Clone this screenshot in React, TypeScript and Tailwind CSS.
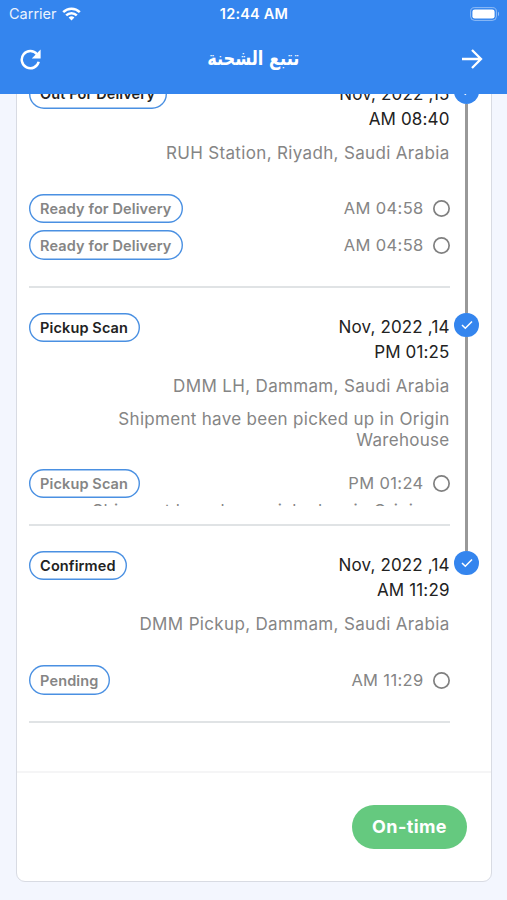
import { clsx } from "clsx";

interface Event {
  label: string;
  time: string;
  note?: string;
}

interface Step {
  label: string;
  date: string;
  time: string;
  place: string;
  note?: string;
  events: Event[];
}

const steps: Step[] = [
  {
    label: "Out For Delivery",
    date: "Nov, 2022 ,15",
    time: "AM 08:40",
    place: "RUH Station, Riyadh, Saudi Arabia",
    events: [
      { label: "Ready for Delivery", time: "AM 04:58" },
      { label: "Ready for Delivery", time: "AM 04:58" },
    ],
  },
  {
    label: "Pickup Scan",
    date: "Nov, 2022 ,14",
    time: "PM 01:25",
    place: "DMM LH, Dammam, Saudi Arabia",
    note: "Shipment have been picked up in Origin Warehouse",
    events: [
      {
        label: "Pickup Scan",
        time: "PM 01:24",
        note: "Shipment have been picked up in Origin",
      },
    ],
  },
  {
    label: "Confirmed",
    date: "Nov, 2022 ,14",
    time: "AM 11:29",
    place: "DMM Pickup, Dammam, Saudi Arabia",
    events: [{ label: "Pending", time: "AM 11:29" }],
  },
];

function StatusBar() {
  return (
    <div className="grid h-[27px] grid-cols-3 items-center pl-[9px] pr-[7px] text-[14.5px] text-white">
      <div className="flex items-center gap-[5px]">
        <span className="opacity-90">Carrier</span>
        <svg width="19" height="14" viewBox="0 0 19 14" fill="none" stroke="white" strokeWidth="2.5">
          <path d="M1.2 5.2a11.7 11.7 0 0 1 16.6 0" />
          <path d="M4.2 8.4a7.5 7.5 0 0 1 10.6 0" />
          <path d="M9.5 13.6 6.6 10.6a4.1 4.1 0 0 1 5.8 0z" fill="white" stroke="none" />
        </svg>
      </div>
      <span className="-ml-[1px] text-center font-semibold tracking-[0.2px]">12:44 AM</span>
      <svg className="justify-self-end" width="30" height="14" viewBox="0 0 30 14" fill="none">
        <rect x="0.6" y="0.6" width="25.8" height="12.8" rx="4" stroke="white" strokeOpacity="0.45" />
        <rect x="2.4" y="2.4" width="22.2" height="9.2" rx="2.4" fill="white" />
        <path d="M28 4.8c1.3.5 1.3 3.9 0 4.4z" fill="white" fillOpacity="0.5" />
      </svg>
    </div>
  );
}

function Header() {
  return (
    <header className="relative z-10 h-[94px] bg-[#3485ee]">
      <StatusBar />
      <div className="grid h-[64px] grid-cols-[1fr_auto_1fr] items-center pl-[20px] pr-[24px]">
        <button aria-label="Refresh" className="justify-self-start">
          <svg width="21" height="21" viewBox="0 0 21 21" fill="none">
            <path d="M17 5.2A8.6 8.6 0 1 0 18.7 12.8" stroke="white" strokeWidth="2.5" />
            <path d="M20.6 0.6V9.4H11.8z" fill="white" />
          </svg>
        </button>
        <h1
          dir="rtl"
          className="whitespace-nowrap pb-[4px] pl-[4px] font-['DejaVu_Sans',sans-serif] text-[18px] font-bold text-white"
        >
          <span className="inline-block origin-center scale-x-90 scale-y-110">تتبع الشحنة</span>
        </h1>
        <button aria-label="Back" className="justify-self-end">
          <svg width="21" height="20" viewBox="0 0 21 20" fill="none" stroke="white" strokeWidth="2.3">
            <path d="M0 10H19M10 1l9 9-9 9" />
          </svg>
        </button>
      </div>
    </header>
  );
}

function Pill({ label, muted }: { label: string; muted?: boolean }) {
  return (
    <span
      className={clsx(
        "flex h-[29.5px] items-center whitespace-nowrap rounded-full px-[11.5px] text-[14.5px] font-semibold tracking-[0.12px] shadow-[inset_0_0_0_1.4px_#4a90e2]",
        muted ? "text-[#858585]" : "text-[#222]",
      )}
    >
      {label}
    </span>
  );
}

function EventRow({ event }: { event: Event }) {
  return (
    <div className="flex h-[29px] items-center justify-between">
      <Pill label={event.label} muted />
      <div className="flex items-center gap-[9px] text-[#858585]">
        <span className="tracking-[0.35px]">{event.time}</span>
        <span className="size-[17px] rounded-full shadow-[inset_0_0_0_1.7px_#808080]" />
      </div>
    </div>
  );
}

function TimelineStep({ step, last }: { step: Step; last: boolean }) {
  return (
    <li className="flex gap-[5px]">
      <div className={clsx("w-[421px] text-[16.5px] leading-[21px]", !last && "pb-[24.5px]")}>
        <div className="flex h-[52px] items-start justify-between">
          <Pill label={step.label} />
          <div className="pt-[2.5px] text-right text-[17px] leading-[25px] tracking-[0.15px] text-[#222]">
            <p>{step.date}</p>
            <p>{step.time}</p>
          </div>
        </div>
        <p className="mt-[11.5px] text-right text-[17px] tracking-[0.34px] text-[#858585]">{step.place}</p>
        {step.note && (
          <p className="ml-auto mt-[12px] w-[345px] text-right text-[17px] tracking-[0.3px] text-[#858585]">
            {step.note}
          </p>
        )}
        <div className={clsx("flex flex-col gap-[7.5px]", step.note ? "mt-[18px]" : "mt-[30.5px]")}>
          {step.events.map((event, i) => (
            <div key={i}>
              <EventRow event={event} />
              {event.note && (
                <p className="h-[8px] overflow-hidden pr-[26px] pt-[2.5px] text-right text-[17px] tracking-[0.3px] text-[#858585]">
                  {event.note}
                </p>
              )}
            </div>
          ))}
        </div>
        <div className={clsx("h-[2px] bg-[#e0e3e5]", step.note ? "mt-[18px]" : "mt-[26.5px]")} />
      </div>
      {/* Rail */}
      <div className="flex w-[24px] flex-col items-center">
        <span className="flex size-[24.5px] shrink-0 items-center justify-center rounded-full bg-[#3485ee]">
          <svg width="12" height="10" viewBox="0 0 12 10" fill="none" stroke="white" strokeWidth="1.5">
            <path d="M1 5l3.3 3.3L11 1.5" />
          </svg>
        </span>
        {!last && <span className="w-[3px] flex-1 bg-[#999]" />}
      </div>
    </li>
  );
}

export default function App() {
  return (
    <div className="h-[900px] w-[507px] overflow-hidden bg-[#f3f6fe] font-['Inter',sans-serif]">
      <Header />
      <main className="-mt-[23px] flex h-[811px] pl-[16px] pr-[15px]">
        <div className="flex w-full flex-col overflow-hidden rounded-[9px] border border-[#d8dbe3] bg-white">
          <ul className="h-[699px] pl-[11.6px] pt-[7px]">
            {steps.map((step, i) => (
              <TimelineStep key={i} step={step} last={i === steps.length - 1} />
            ))}
          </ul>
          <div className="flex flex-1 justify-end border-t-2 border-[#f5f5f6] pr-[24px] pt-[32px]">
            <span className="flex h-[44px] w-[115px] items-center justify-center rounded-full bg-[#65c97f] pb-[1px] text-[18px] font-bold tracking-[0.4px] text-white">
              On-time
            </span>
          </div>
        </div>
      </main>
    </div>
  );
}
